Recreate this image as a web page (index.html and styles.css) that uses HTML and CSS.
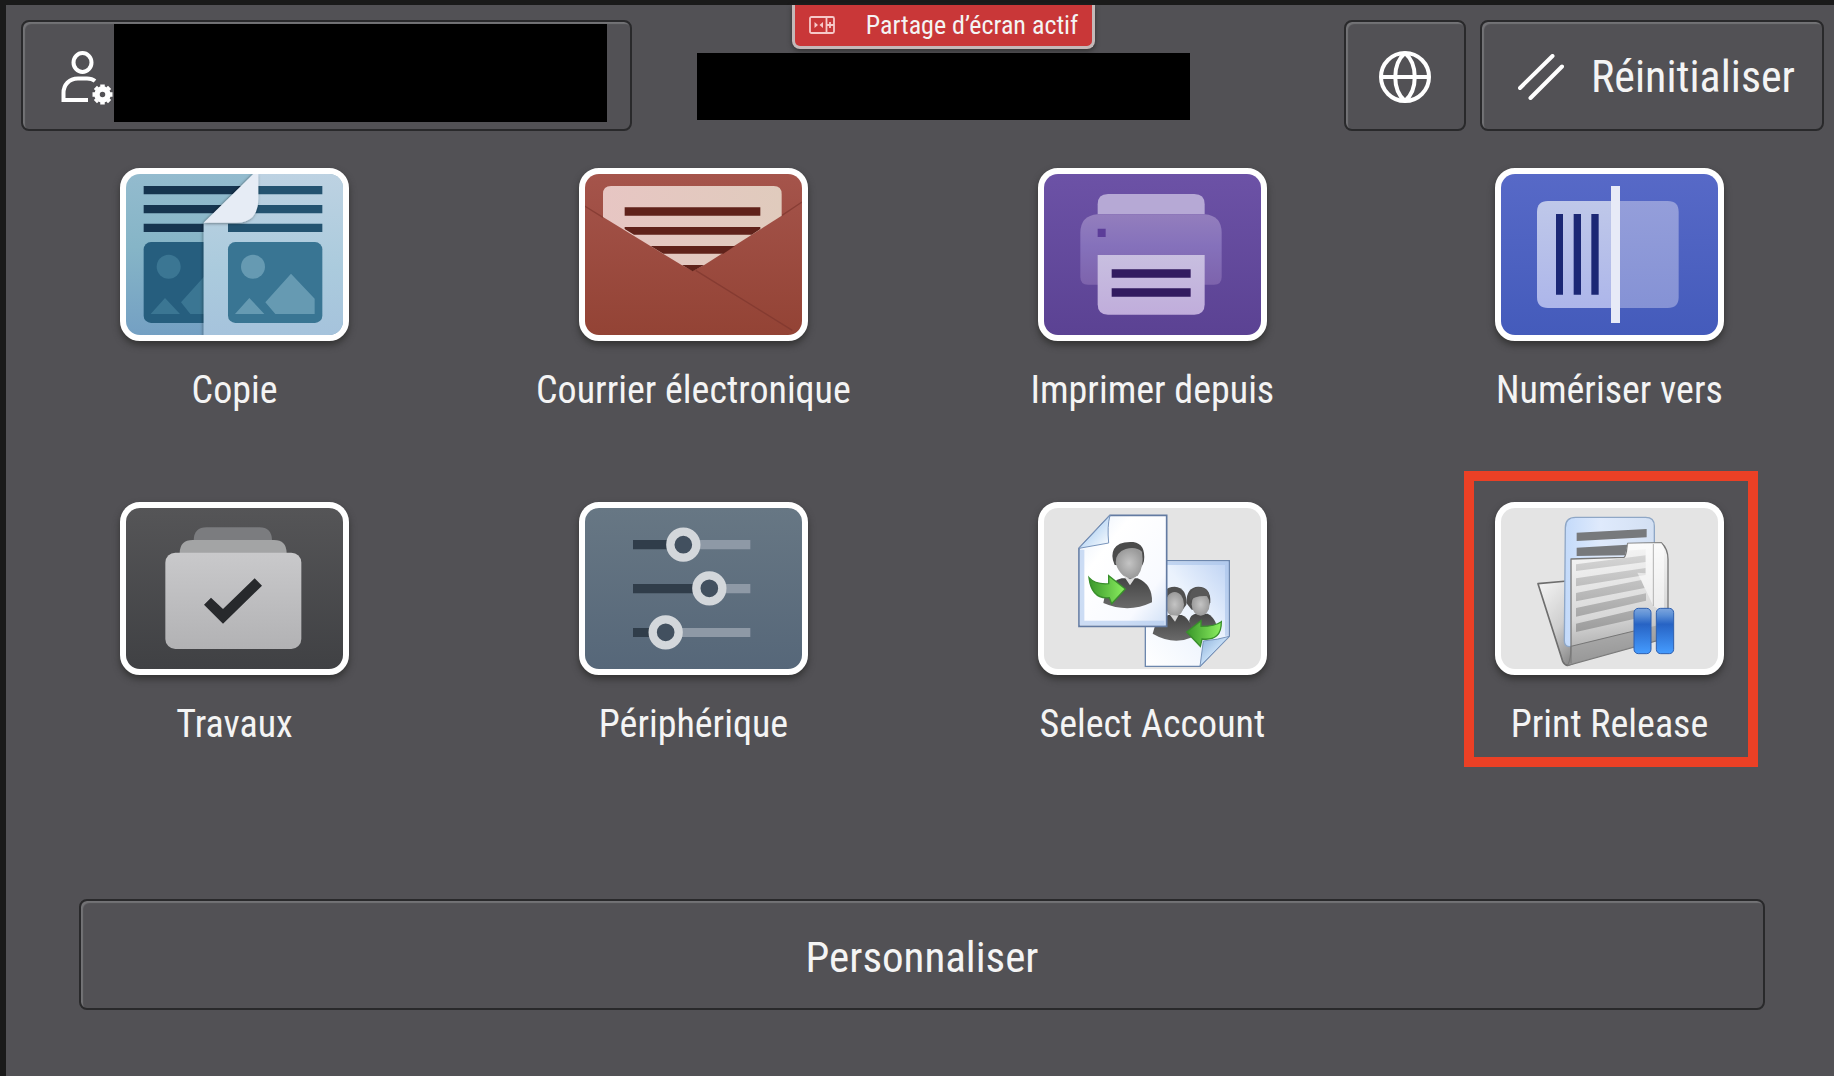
FILE: index.html
```html
<!DOCTYPE html>
<html lang="fr">
<head>
<meta charset="utf-8">
<meta name="viewport" content="width=device-width, initial-scale=1">
<title>Accueil</title>
<link rel="stylesheet" href="styles.css">
</head>
<body>
<div class="screen">
  <header class="topbar">
    <button type="button" class="key user" aria-label="Utilisateur">
      <svg class="user-icon" viewBox="60 46 54 60" fill="none" stroke="#fff" stroke-width="4" stroke-linecap="round" aria-hidden="true">
        <ellipse cx="82.500" cy="62.500" rx="9" ry="9.500"/>
        <path d="M95 81Q92 78.500 87 78.500H78C69 78.500 63.500 85 63.500 93V100H88" stroke-linecap="butt"/>
        <circle cx="102.500" cy="94.500" r="5.500" stroke-width="5.500"/>
        <path d="M102.500 87V84.500M102.500 102V104.500M95 94.500H92.500M110 94.500H112.500M97.200 89.200L95.400 87.400M107.800 99.800L109.600 101.600M97.200 99.800L95.400 101.600M107.800 89.200L109.600 87.400" stroke-width="4.500" stroke-linecap="butt"/>
      </svg>
      <span class="mask mask-user"></span>
    </button>
    <div class="status">
      <p class="share">
        <svg class="share-icon" viewBox="0 0 26 18" fill="none" stroke="#f6c9c9" stroke-width="1.800" aria-hidden="true">
          <rect x="1" y="1" width="24" height="16" rx="1.500"/>
          <path d="M17.500 1V17M17.500 9H25M21 6V12"/>
          <path d="M5.500 6L9 9L5.500 12ZM14 6L10.500 9L14 12Z" fill="#f6c9c9" stroke="none"/>
        </svg>
        <span>Partage d’écran actif</span>
      </p>
      <div class="mask mask-status"></div>
    </div>
    <div class="actions">
      <button type="button" class="key globe" aria-label="Langue">
        <svg class="globe-icon" viewBox="0 0 54 54" fill="none" stroke="#fff" stroke-width="4" aria-hidden="true">
          <circle cx="27" cy="27" r="24"/>
          <path d="M3 27H51M27 3C14 14 14 40 27 51M27 3C40 14 40 40 27 51"/>
        </svg>
      </button>
      <button type="button" class="key reset">
        <svg class="reset-icon" viewBox="0 0 46 46" stroke="#fff" stroke-width="4" stroke-linecap="round" aria-hidden="true">
          <path d="M2 34L34.500 2M12.500 44L44 12.500"/>
        </svg>
        <span>Réinitialiser</span>
      </button>
    </div>
  </header>

  <main class="home">
    <nav class="apps" aria-label="Applications">
      <a class="app" href="#copie">
        <svg class="tile" viewBox="80 71 651 483" preserveAspectRatio="none" aria-hidden="true">
          <defs>
            <linearGradient id="copyBack" x1="0" y1="0" x2="0" y2="1"><stop offset="0" stop-color="#93bbce"/><stop offset=".450" stop-color="#86b5c7"/><stop offset="1" stop-color="#74a0c3"/></linearGradient>
            <linearGradient id="copyFront" x1="0" y1="0" x2="0" y2="1"><stop offset="0" stop-color="#bdd2e2"/><stop offset=".550" stop-color="#abcbdd"/><stop offset="1" stop-color="#a5c2dc"/></linearGradient>
            <filter id="soft" x="-20%" y="-20%" width="140%" height="140%"><feDropShadow dx="-2" dy="3" stdDeviation="4" flood-opacity=".4"/></filter>
          </defs>
          <path fill="url(#copyBack)" d="M80 71H731V554H80Z"/>
          <path fill="#15344f" d="M133 107H440V132H133ZM133 164H400V189H133ZM133 220H400V245H133Z"/>
          <rect x="133" y="275" width="280" height="243" rx="22" fill="#265e7e"/>
          <circle cx="208" cy="349" r="36" fill="#3b7693"/>
          <path fill="#3b7693" d="M154 491L197 443L242 491ZM245 456L322 370V491H273Z"/>
          <path filter="url(#soft)" fill="url(#copyFront)" d="M462 71H760V580H313V219Z"/>
          <path fill="#235370" d="M460 107H669V132H460ZM440 164H669V189H440ZM386 220H669V245H386Z"/>
          <rect x="386" y="275" width="283" height="243" rx="22" fill="#397593"/>
          <circle cx="461" cy="349" r="36" fill="#669ab2"/>
          <path fill="#669ab2" d="M407 491L450 443L495 491ZM498 456L575 370L646 445V491H528Z"/>
          <path filter="url(#soft)" fill="#e6ecf5" d="M462 71H477V145Q477 217 410 217H313Z"/>
        </svg>
        <span class="label">Copie</span>
      </a>
      <a class="app" href="#courrier">
        <svg class="tile" viewBox="193 71 651 483" preserveAspectRatio="none" aria-hidden="true">
          <defs>
            <linearGradient id="mail" x1="0" y1="0" x2="0" y2="1"><stop offset="0" stop-color="#a5544b"/><stop offset="1" stop-color="#934335"/></linearGradient>
            <linearGradient id="paper" x1="0" y1="0" x2="1" y2="0"><stop offset="0" stop-color="#e7c6c3"/><stop offset="1" stop-color="#e0cbbd"/></linearGradient>
          </defs>
          <path fill="url(#mail)" d="M193 71H844V554H193Z"/>
          <path stroke="#7d362e" stroke-width="4" fill="none" opacity=".700" d="M193 168L248 202M783 196L844 155M525 360L815 540"/>
          <path fill="url(#paper)" d="M247 200V131Q247 107 271 107H759Q783 107 783 131V196L552 343L516 361L484 345Z"/>
          <path fill="#60221a" d="M312 171H719V196H312ZM312 230H719V236L693 253H340L312 236ZM390 287H643L608 310H428ZM484 344H550L516 363Z"/>
        </svg>
        <span class="label">Courrier électronique</span>
      </a>
      <a class="app" href="#imprimer">
        <svg class="tile" viewBox="97 71 651 483" preserveAspectRatio="none" aria-hidden="true">
          <defs>
            <linearGradient id="print" x1="0" y1="0" x2="0" y2="1"><stop offset="0" stop-color="#6c52a6"/><stop offset="1" stop-color="#5b4293"/></linearGradient>
            <linearGradient id="printBody" x1="0" y1="0" x2="0" y2="1"><stop offset="0" stop-color="#937ebd"/><stop offset=".450" stop-color="#8571bb"/><stop offset="1" stop-color="#7d63ac"/></linearGradient>
            <linearGradient id="sheet" x1="0" y1="0" x2="0" y2="1"><stop offset="0" stop-color="#c8bfe0"/><stop offset="1" stop-color="#c0addb"/></linearGradient>
          </defs>
          <path fill="url(#print)" d="M97 71H748V554H97Z"/>
          <path fill="#b6a9d5" d="M258 192V162Q258 131 289 131H548Q579 131 579 162V192Z"/>
          <path fill="url(#printBody)" d="M258 192H579Q630 196 630 248V380Q630 403 607 403H229Q206 403 206 380V248Q206 196 258 192Z"/>
          <path fill="#5c3d99" d="M258 235H282V260H258Z"/>
          <path fill="url(#sheet)" d="M258 314H579V462Q579 493 548 493H289Q258 493 258 462Z"/>
          <path fill="#321b60" d="M300 357H537V382H300ZM300 414H537V439H300Z"/>
        </svg>
        <span class="label">Imprimer depuis</span>
      </a>
      <a class="app" href="#numeriser">
        <svg class="tile" viewBox="121 71 651 483" preserveAspectRatio="none" aria-hidden="true">
          <defs>
            <linearGradient id="scan" x1="0" y1="0" x2="0" y2="1"><stop offset="0" stop-color="#5769c7"/><stop offset="1" stop-color="#445bbb"/></linearGradient>
            <linearGradient id="scanLeft" x1="0" y1="0" x2="0" y2="1"><stop offset="0" stop-color="#bfc8e9"/><stop offset="1" stop-color="#adb6ea"/></linearGradient>
            <linearGradient id="scanRight" x1="0" y1="0" x2="0" y2="1"><stop offset="0" stop-color="#949eda"/><stop offset="1" stop-color="#8592d5"/></linearGradient>
          </defs>
          <path fill="url(#scan)" d="M121 71H772V554H121Z"/>
          <path fill="url(#scanLeft)" d="M464 152H262Q229 152 229 185V440Q229 473 262 473H464Z"/>
          <path fill="url(#scanRight)" d="M464 152H621Q654 152 654 185V440Q654 473 621 473H464Z"/>
          <path fill="#1b2775" d="M286 191H307V433H286ZM339 191H361V433H339ZM392 191H414V433H392Z"/>
          <path fill="#e7eaf7" d="M451 107H478V518H451Z"/>
        </svg>
        <span class="label">Numériser vers</span>
      </a>
      <a class="app" href="#travaux">
        <svg class="tile" viewBox="80 55 651 483" preserveAspectRatio="none" aria-hidden="true">
          <defs>
            <linearGradient id="jobs" x1="0" y1="0" x2="0" y2="1"><stop offset="0" stop-color="#555557"/><stop offset="1" stop-color="#404144"/></linearGradient>
            <linearGradient id="folder" x1="0" y1="0" x2="0" y2="1"><stop offset="0" stop-color="#c9c9cb"/><stop offset="1" stop-color="#b2b2b4"/></linearGradient>
          </defs>
          <path fill="url(#jobs)" d="M80 55H731V538H80Z"/>
          <path fill="#7b7c7f" d="M283 152Q284 113 322 113H480Q517 113 518 152Z"/>
          <path fill="#a3a4a5" d="M241 190Q242 151 280 151H524Q561 151 562 190Z"/>
          <rect x="198" y="189" width="408" height="289" rx="30" fill="url(#folder)"/>
          <path fill="#27292c" d="M314 345L335 324L371 358L466 266L488 288L371 402Z"/>
        </svg>
        <span class="label">Travaux</span>
      </a>
      <a class="app" href="#peripherique">
        <svg class="tile" viewBox="74 55 651 483" preserveAspectRatio="none" aria-hidden="true">
          <defs>
            <linearGradient id="device" x1="0" y1="0" x2="0" y2="1"><stop offset="0" stop-color="#677784"/><stop offset="1" stop-color="#566779"/></linearGradient>
          </defs>
          <path fill="url(#device)" d="M74 55H725V538H74Z"/>
          <path fill="#303d4a" d="M218 151H369V179H218ZM218 283H448V311H218ZM218 415H316V442H218Z"/>
          <path fill="#8e99a6" d="M369 151H570V179H369ZM448 283H570V311H448ZM316 415H570V442H316Z"/>
          <g fill="#42505f" stroke="#d3d7db" stroke-width="25">
            <circle cx="369" cy="165" r="39"/><circle cx="447" cy="296" r="39"/><circle cx="316" cy="428" r="39"/>
          </g>
        </svg>
        <span class="label">Périphérique</span>
      </a>
      <a class="app" href="#account">
        <svg class="tile" viewBox="67 55 651 483" preserveAspectRatio="none" aria-hidden="true">
          <defs>
            <linearGradient id="pageA" x1="0" y1="0" x2="1" y2="1"><stop offset="0" stop-color="#e4eefb"/><stop offset=".300" stop-color="#fff"/><stop offset=".750" stop-color="#f8faff"/><stop offset="1" stop-color="#cfdff6"/></linearGradient>
            <linearGradient id="pageB" x1="1" y1="0" x2="0" y2="1"><stop offset="0" stop-color="#bdd2f3"/><stop offset=".400" stop-color="#eaf2fd"/><stop offset="1" stop-color="#fff"/></linearGradient>
            <linearGradient id="curl" x1="0" y1="0" x2="1" y2="1"><stop offset="0" stop-color="#88afd9"/><stop offset=".500" stop-color="#c6def6"/><stop offset="1" stop-color="#fff"/></linearGradient>
            <radialGradient id="face"><stop offset="0" stop-color="#c4c4c4"/><stop offset="1" stop-color="#9a9a9a"/></radialGradient>
            <linearGradient id="coat" x1="0" y1="0" x2="0" y2="1"><stop offset="0" stop-color="#454545"/><stop offset="1" stop-color="#6a6a6a"/></linearGradient>
            <linearGradient id="arrow" x1="0" y1="0" x2="1" y2="0"><stop offset="0" stop-color="#39962a"/><stop offset="1" stop-color="#8cf060"/></linearGradient>
          </defs>
          <path fill="#e4e4e4" d="M67 55H718V538H67Z"/>
          <path fill="url(#pageB)" stroke="#6d87ad" stroke-width="4" d="M371 213H623V440L535 530H371Z"/>
          <path fill="none" stroke="#a9c3ea" stroke-width="10" opacity=".600" d="M436 221H615V438"/>
          <g>
            <path fill="url(#coat)" d="M503 392Q506 376 521 372H558Q590 390 584 430Q545 445 503 430Z"/>
            <path fill="#505050" d="M494 340Q494 292 530 291Q568 292 566 338L556 360H510Z"/>
            <ellipse cx="537" cy="344" rx="27" ry="34" fill="url(#face)"/>
            <path fill="#585858" d="M506 333Q520 316 564 320Q560 294 530 293Q500 300 506 333Z"/>
            <path fill="url(#coat)" d="M393 432Q400 390 440 376H480Q512 390 514 442Q455 468 393 432Z"/>
            <path fill="#505050" d="M420 340Q420 291 459 291Q497 294 494 345L482 362H430Z"/>
            <ellipse cx="459" cy="344" rx="28" ry="37" fill="url(#face)"/>
            <path fill="#d5d5d5" d="M445 376L460 396L470 378Z"/>
          </g>
          <path fill="url(#curl)" stroke="#7894bb" stroke-width="3" d="M535 530L545 454Q590 450 623 440Z"/>
          <path fill="url(#pageA)" stroke="#637ba2" stroke-width="5" d="M265 77H435V410H172V176Z"/>
          <path fill="none" stroke="#b2cbee" stroke-width="14" opacity=".650" d="M181 180V400H428"/>
          <path fill="url(#curl)" stroke="#7894bb" stroke-width="3" d="M265 77Q256 110 261 160L172 176Z"/>
          <path fill="url(#coat)" d="M245 340Q255 278 300 266H348Q393 285 391 338Q320 372 245 340Z"/>
          <path fill="#4b4b4b" d="M279 226Q266 198 277 178Q290 154 335 157Q373 163 367 214Q365 222 360 230Z"/>
          <path fill="url(#face)" d="M282 220Q281 188 312 178Q343 170 361 186Q368 230 349 257Q330 275 305 258Q288 243 282 220Z"/>
          <path fill="#ddd" d="M305 257L325 287L342 262L325 269Z"/>
          <g stroke="#398f2c" stroke-width="4" fill="url(#arrow)">
            <path d="M202 264Q220 285 261 282V258L311 298L270 342L263 324Q210 330 202 264Z"/>
            <path d="M599 396Q580 410 538 410V393L495 427L536 470L541 448Q600 455 599 396Z"/>
          </g>
        </svg>
        <span class="label">Select Account</span>
      </a>
      <a class="app selected" href="#release">
        <svg class="tile" viewBox="151 146 651 483" preserveAspectRatio="none" aria-hidden="true">
          <defs>
            <linearGradient id="doc" x1="0" y1="0" x2="1" y2="0"><stop offset="0" stop-color="#c3dafa"/><stop offset=".400" stop-color="#dfeafc"/><stop offset="1" stop-color="#d3e0f3"/></linearGradient>
            <linearGradient id="flapBack" x1=".100" y1="0" x2=".700" y2="1"><stop offset="0" stop-color="#f3f3f3"/><stop offset=".550" stop-color="#cfcfcf"/><stop offset="1" stop-color="#858585"/></linearGradient>
            <linearGradient id="flapFront" x1=".300" y1="0" x2=".400" y2="1"><stop offset="0" stop-color="#f8f8f8"/><stop offset=".600" stop-color="#d8d8d8"/><stop offset="1" stop-color="#999"/></linearGradient>
            <linearGradient id="pause" x1="0" y1="0" x2="0" y2="1"><stop offset="0" stop-color="#7ea6dd"/><stop offset=".150" stop-color="#5b8fd6"/><stop offset=".350" stop-color="#2763c4"/><stop offset="1" stop-color="#459cff"/></linearGradient>
            <linearGradient id="lines" x1="0" y1="0" x2="0" y2="1"><stop offset="0" stop-color="#d5d5d5"/><stop offset="1" stop-color="#9c9c9c"/></linearGradient>
          </defs>
          <path fill="#e4e4e4" d="M151 146H802V629H151Z"/>
          <path fill="url(#flapBack)" stroke="#6e6e6e" stroke-width="5" stroke-linejoin="round" d="M262 373L350 365L400 600L352 618Q343 619 336 606Z"/>
          <path fill="url(#doc)" stroke="#8fa7c6" stroke-width="4" d="M344 205Q344 174 375 174H585Q611 174 611 200V480L358 562Q341 562 341 545Z"/>
          <path fill="#77797c" d="M378 220L588 209V234L378 245ZM378 265L530 256L523 288L378 290Z"/>
          <path fill="url(#flapFront)" stroke="#787878" stroke-width="4" stroke-linejoin="round" d="M361 299L520 294Q526 292 531 252L632 250Q652 268 652 300V535L352 618Q361 600 361 562Z"/>
          <path fill="#8f8f8f" opacity=".500" d="M361 561L652 490V535L352 618Q361 600 361 561Z"/>
          <path fill="none" stroke="#767676" stroke-width="3" d="M361 561V612M361 561L550 515"/>
          <path fill="url(#lines)" d="M376 315L585 288V308L376 335ZM376 357L585 326V347L376 381ZM376 401L572 362L582 386L376 426ZM376 446L586 402V424L376 472ZM376 493L560 450V477L376 518Z"/>
          <path fill="#fff" opacity=".550" d="M531 252L632 250Q645 268 640 300V460L608 440Q580 380 560 340L585 342V270L530 274Z"/>
          <path stroke="#b1b1b1" stroke-width="3" d="M608 254V440"/>
          <g fill="url(#pause)" stroke="#2f5fae" stroke-width="3">
            <rect x="550" y="447" width="51" height="136" rx="13"/>
            <rect x="617" y="447" width="52" height="136" rx="13"/>
          </g>
        </svg>
        <span class="label">Print Release</span>
      </a>
    </nav>
    <button type="button" class="key customize">Personnaliser</button>
  </main>
</div>
</body>
</html>
```
FILE: styles.css
```css
* {
  box-sizing: border-box;
}

body {
  margin: 0;
  background: #525155;
  color: #f4f4f4;
  font-family: "Roboto Condensed", "Liberation Sans Narrow", Roboto, sans-serif;
}

.screen {
  min-height: 100vh;
  border-top: 5px solid #1a1a1a;
  border-left: 6px solid #1a1a1a;
}

.topbar {
  display: flex;
  align-items: flex-start;
  padding: 0 10px 0 15px;
}

.key {
  height: 111px;
  padding: 2px 0 0;
  border: 2px solid #29292b;
  border-radius: 8px;
  background: transparent;
  box-shadow: inset 2px 2px 1px #737376;
  color: inherit;
  font: inherit;
  font-size: 43px;
  line-height: 50px;
}

.user {
  display: flex;
  align-items: flex-start;
  flex: 0 1 611px;
  margin-top: 15px;
  padding: 2px 0 0 37px;
}

.user-icon {
  flex: none;
  width: 54px;
  height: 60px;
  margin-top: 22px;
}

.mask {
  background: #000;
}

.mask-user {
  flex: 0 1 493px;
  height: 98px;
}

.status {
  display: flex;
  flex-direction: column;
  align-items: center;
  gap: 4px;
  flex: 0 1 493px;
  margin-left: 65px;
}

.mask-status {
  align-self: stretch;
  height: 67px;
}

.share {
  display: flex;
  align-items: center;
  gap: 31px;
  height: 44px;
  margin: 0;
  padding: 0 14px 2px;
  border: 3px solid #c4b9b9;
  border-top: 0;
  border-radius: 0 0 8px 8px;
  background: #c93738;
  box-shadow: 0 2px 5px #333;
  font-size: 26px;
  line-height: 32px;
  white-space: nowrap;
}

.share-icon {
  width: 26px;
  height: 18px;
}

.actions {
  display: flex;
  gap: 14px;
  margin-top: 15px;
  margin-left: auto;
}

.globe {
  display: grid;
  place-items: center;
  width: 122px;
}

.globe-icon {
  width: 54px;
  height: 54px;
}

.reset {
  display: flex;
  align-items: center;
  justify-content: space-between;
  width: 344px;
  padding: 2px 27px 0 36px;
  font-size: 44px;
}

.reset-icon {
  width: 46px;
  height: 46px;
}

.home {
  padding: 37px 69px 65px 73px;
}

.apps {
  display: grid;
  grid-template-columns: repeat(4, 1fr);
  gap: 91px 146px;
}

.app {
  position: relative;
  display: flex;
  flex-direction: column;
  align-items: center;
  gap: 28px;
  color: inherit;
  text-decoration: none;
}

.tile {
  width: 229px;
  height: 173px;
  border: 6px solid #fff;
  border-radius: 20px;
  background: #fff;
  box-shadow: 0 4px 7px #333;
}

.label {
  font-size: 38px;
  line-height: 42px;
  white-space: nowrap;
}

.selected::after {
  content: "";
  position: absolute;
  inset: -31px 7px -22px 10px;
  border: 10px solid #eb4025;
}

.customize {
  display: block;
  width: 100%;
  margin-top: 154px;
  padding-top: 4px;
}
```
